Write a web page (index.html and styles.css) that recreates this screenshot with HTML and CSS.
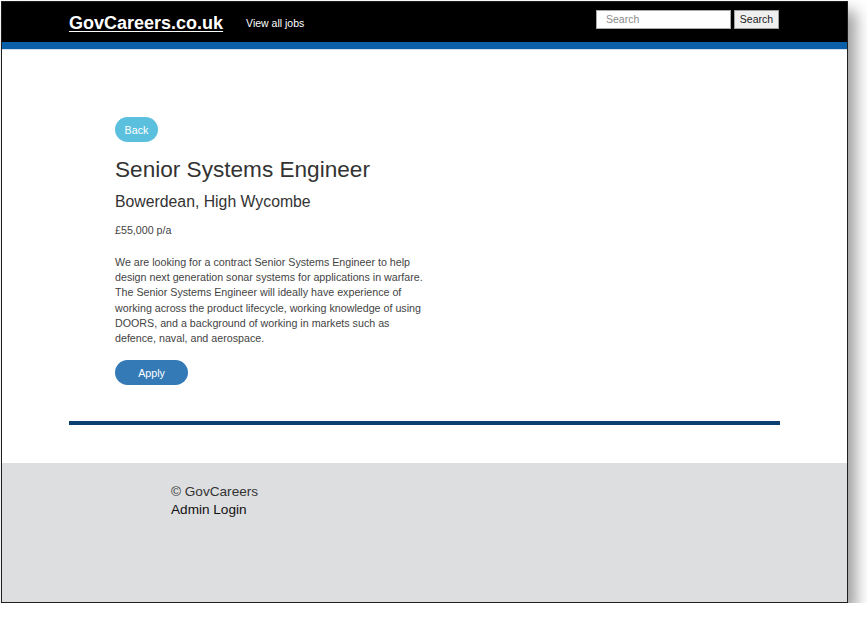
FILE: index.html
```html
<!DOCTYPE html>
<html lang="en">
<head>
<meta charset="utf-8">
<title>Senior Systems Engineer - GovCareers.co.uk</title>
<link rel="stylesheet" href="styles.css">
</head>
<body>
<div class="window">
  <header class="site-header">
    <div class="container header-inner">
      <a class="logo" href="#">GovCareers.co.uk</a>
      <a class="nav-link" href="#">View all jobs</a>
      <form class="search-form">
        <input class="search-input" type="text" placeholder="Search">
        <button class="search-btn" type="button">Search</button>
      </form>
    </div>
  </header>
  <div class="accent-bar"></div>
  <main class="main">
    <div class="container">
      <section class="job">
        <a class="btn btn-back" href="#">Back</a>
        <h1 class="job-title">Senior Systems Engineer</h1>
        <h2 class="job-location">Bowerdean, High Wycombe</h2>
        <p class="job-salary">£55,000 p/a</p>
        <p class="job-desc">We are looking for a contract Senior Systems Engineer to help design next generation sonar systems for applications in warfare. The Senior Systems Engineer will ideally have experience of working across the product lifecycle, working knowledge of using DOORS, and a background of working in markets such as defence, naval, and aerospace.</p>
        <a class="btn btn-apply" href="#">Apply</a>
      </section>
      <hr class="divider">
    </div>
  </main>
  <footer class="site-footer">
    <div class="container footer-inner">
      <div class="copyright">© GovCareers</div>
      <a class="admin-link" href="#">Admin Login</a>
    </div>
  </footer>
</div>
</body>
</html>
```

FILE: styles.css
```css
html, body {
  margin: 0;
  padding: 0;
  background: #ffffff;
}

body {
  font-family: "Liberation Sans", Arial, Helvetica, sans-serif;
  color: #333;
  padding: 1px 0 0 1px;
}

.window {
  box-sizing: border-box;
  width: 847px;
  height: 602px;
  border: 1px solid #1e1e1e;
  background: #fff;
  box-shadow: 8px 10px 14px rgba(0, 0, 0, 0.38);
  display: flex;
  flex-direction: column;
  overflow: hidden;
}

.container {
  width: 711px;
  margin: 0 auto;
}

/* Header */
.site-header {
  background: #000;
  height: 40px;
}

.header-inner {
  height: 100%;
  display: flex;
  align-items: center;
}

.logo {
  color: #fff;
  font-weight: bold;
  font-size: 18px;
  text-decoration: underline;
  text-underline-offset: 2px;
  margin-top: 2px;
}

.nav-link {
  color: #fff;
  font-size: 10.5px;
  text-decoration: none;
  margin-left: 23px;
  margin-top: 2px;
}

.search-form {
  margin-left: auto;
  margin-right: 1px;
  display: flex;
  gap: 3px;
  margin-top: -6px;
}

.search-input {
  box-sizing: border-box;
  width: 135px;
  height: 19px;
  border: 1px solid #a9a9a9;
  padding: 0 0 0 9px;
  font-family: inherit;
  font-size: 10.5px;
  color: #555;
  background: #fff;
  outline: none;
}

.search-input::placeholder {
  color: #8a8a8a;
}

.search-btn {
  box-sizing: border-box;
  width: 45px;
  height: 19px;
  border: 1px solid #a0a0a0;
  background: #efefef;
  font-family: inherit;
  font-size: 10.5px;
  color: #222;
  padding: 0;
}

.accent-bar {
  height: 7px;
  background: #0b5fa8;
  border-bottom: 1px solid #d3dfec;
}

/* Main */
.main {
  padding-top: 67px;
}

.job {
  padding-left: 46px;
}

.btn {
  display: flex;
  align-items: center;
  justify-content: center;
  height: 25px;
  border-radius: 13px;
  color: #fff;
  font-size: 10.7px;
  text-decoration: none;
}

.btn-back {
  width: 43px;
  background: #5bc0de;
}

.btn-apply {
  width: 73px;
  background: #337ab7;
  margin-top: 14px;
}

.job-title {
  margin: 15px 0 0;
  font-size: 22.6px;
  line-height: 26px;
  font-weight: normal;
  color: #333;
}

.job-location {
  margin: 10px 0 0;
  font-size: 15.8px;
  line-height: 18px;
  font-weight: normal;
  color: #333;
}

.job-salary {
  margin: 11.5px 0 0;
  font-size: 10.7px;
  line-height: 15px;
  color: #444;
}

.job-desc {
  margin: 17.5px 0 0;
  width: 312px;
  font-size: 10.7px;
  line-height: 15.2px;
  color: #444;
}

.divider {
  margin: 36px 0 0;
  border: 0;
  height: 4px;
  background: #0c3f71;
}

/* Footer */
.site-footer {
  margin-top: 38px;
  flex: 1;
  background: #dddee0;
}

.footer-inner {
  box-sizing: border-box;
  padding: 20px 0 0 102px;
  font-size: 13.6px;
  line-height: 18px;
}

.copyright {
  color: #333;
}

.admin-link {
  display: block;
  color: #111;
  text-decoration: none;
}
```
